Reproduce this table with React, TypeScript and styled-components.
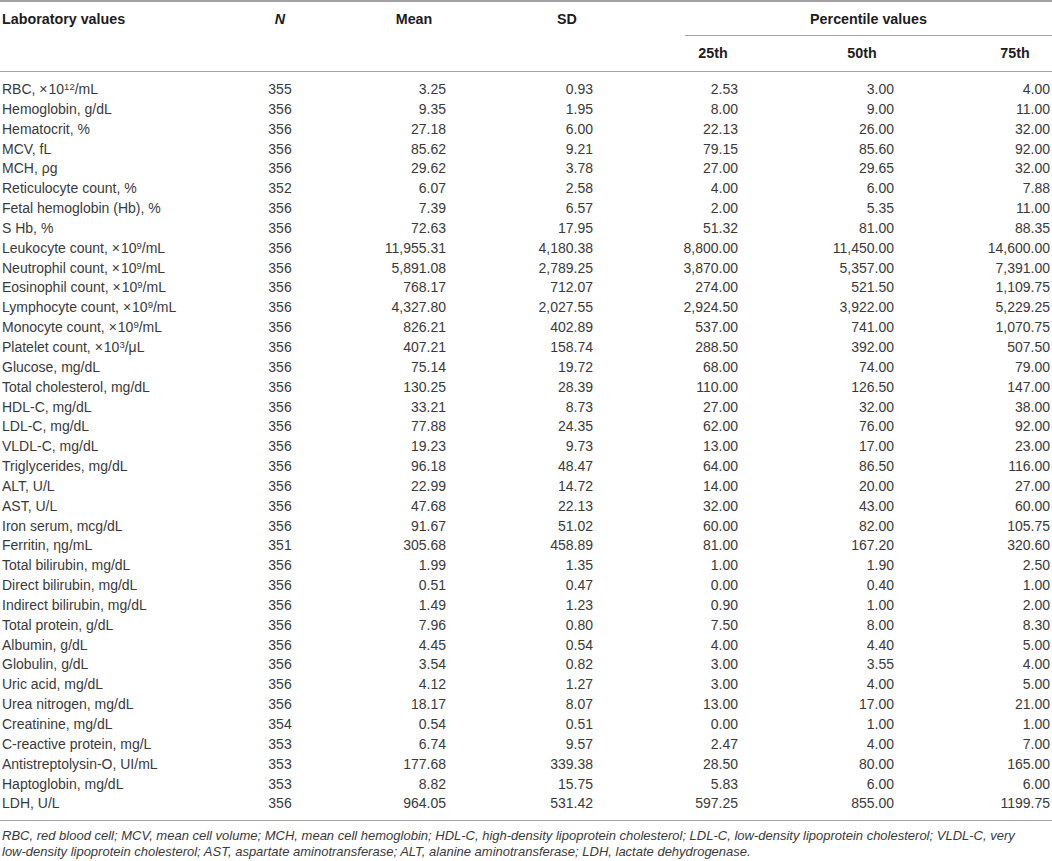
import React from "react";
import styled, { createGlobalStyle } from "styled-components";

const GlobalStyle = createGlobalStyle`
  html, body { margin: 0; padding: 0; background: #ffffff; }
  body {
    font-family: "Liberation Sans", Arial, Helvetica, sans-serif;
    color: #3a3a3a;
  }
`;

const COLS = "228px 100px 116px 147px 145px 156px 156px";

const Page = styled.div`
  width: 1052px;
`;

const Table = styled.div`
  border-top: 2px solid #a3a3a3;
  border-bottom: 1px solid #a3a3a3;
`;

const Head = styled.div`
  display: grid;
  grid-template-columns: ${COLS};
  grid-template-rows: 34px 35px;
  padding: 0 2px;
  border-bottom: 1px solid #a3a3a3;
  font-weight: bold;
  font-size: 14.3px;
  color: #1c1c1c;
`;

const HeadCell = styled.div<{ $col: string; $row: string; $align?: "start" | "center" | "end"; $italic?: boolean }>`
  grid-column: ${(p) => p.$col};
  grid-row: ${(p) => p.$row};
  display: flex;
  align-items: center;
  height: 34px;
  justify-content: ${(p) =>
    p.$align === "end" ? "flex-end" : p.$align === "center" ? "center" : "flex-start"};
  font-style: ${(p) => (p.$italic ? "italic" : "normal")};
`;

const NumHead = styled.span<{ $shift?: number }>`
  display: block;
  width: 60px;
  text-align: center;
  margin-right: ${(p) => p.$shift ?? 0}px;
`;

const SpanHead = styled.div`
  grid-column: 5 / 8;
  grid-row: 1;
  margin-left: 92px;
  margin-right: -2px;
  display: flex;
  align-items: center;
  justify-content: center;
  border-bottom: 1px solid #a3a3a3;
`;

const Body = styled.div`
  padding: 8px 2px 6px;
`;

const Row = styled.div`
  display: grid;
  grid-template-columns: ${COLS};
  height: 19.85px;
  line-height: 19.85px;
  font-size: 14px;
  white-space: nowrap;
`;

const Label = styled.div``;

const Cell = styled.div<{ $center?: boolean }>`
  text-align: ${(p) => (p.$center ? "center" : "right")};
`;

const Times = styled.span`
  margin: 0 1px 0 0;
`;

const Sup = styled.sup`
  font-size: 0.68em;
  line-height: 0;
  vertical-align: 0.45em;
`;

const Foot = styled.p`
  margin: 7px 0 0;
  padding: 0 2px;
  max-width: 1022px;
  font-style: italic;
  font-size: 13px;
  line-height: 16px;
  color: #3a3a3a;
`;

type R = [React.ReactNode, string, string, string, string, string, string];

const x10 = (e: string, unit: string) => (
  <>
    <Times>×</Times>10<Sup>{e}</Sup>/{unit}
  </>
);

const rows: R[] = [
  [<>RBC, {x10("12", "mL")}</>, "355", "3.25", "0.93", "2.53", "3.00", "4.00"],
  ["Hemoglobin, g/dL", "356", "9.35", "1.95", "8.00", "9.00", "11.00"],
  ["Hematocrit, %", "356", "27.18", "6.00", "22.13", "26.00", "32.00"],
  ["MCV, fL", "356", "85.62", "9.21", "79.15", "85.60", "92.00"],
  ["MCH, ρg", "356", "29.62", "3.78", "27.00", "29.65", "32.00"],
  ["Reticulocyte count, %", "352", "6.07", "2.58", "4.00", "6.00", "7.88"],
  ["Fetal hemoglobin (Hb), %", "356", "7.39", "6.57", "2.00", "5.35", "11.00"],
  ["S Hb, %", "356", "72.63", "17.95", "51.32", "81.00", "88.35"],
  [<>Leukocyte count, {x10("9", "mL")}</>, "356", "11,955.31", "4,180.38", "8,800.00", "11,450.00", "14,600.00"],
  [<>Neutrophil count, {x10("9", "mL")}</>, "356", "5,891.08", "2,789.25", "3,870.00", "5,357.00", "7,391.00"],
  [<>Eosinophil count, {x10("9", "mL")}</>, "356", "768.17", "712.07", "274.00", "521.50", "1,109.75"],
  [<>Lymphocyte count, {x10("9", "mL")}</>, "356", "4,327.80", "2,027.55", "2,924.50", "3,922.00", "5,229.25"],
  [<>Monocyte count, {x10("9", "mL")}</>, "356", "826.21", "402.89", "537.00", "741.00", "1,070.75"],
  [<>Platelet count, {x10("3", "μL")}</>, "356", "407.21", "158.74", "288.50", "392.00", "507.50"],
  ["Glucose, mg/dL", "356", "75.14", "19.72", "68.00", "74.00", "79.00"],
  ["Total cholesterol, mg/dL", "356", "130.25", "28.39", "110.00", "126.50", "147.00"],
  ["HDL-C, mg/dL", "356", "33.21", "8.73", "27.00", "32.00", "38.00"],
  ["LDL-C, mg/dL", "356", "77.88", "24.35", "62.00", "76.00", "92.00"],
  ["VLDL-C, mg/dL", "356", "19.23", "9.73", "13.00", "17.00", "23.00"],
  ["Triglycerides, mg/dL", "356", "96.18", "48.47", "64.00", "86.50", "116.00"],
  ["ALT, U/L", "356", "22.99", "14.72", "14.00", "20.00", "27.00"],
  ["AST, U/L", "356", "47.68", "22.13", "32.00", "43.00", "60.00"],
  ["Iron serum, mcg/dL", "356", "91.67", "51.02", "60.00", "82.00", "105.75"],
  ["Ferritin, ηg/mL", "351", "305.68", "458.89", "81.00", "167.20", "320.60"],
  ["Total bilirubin, mg/dL", "356", "1.99", "1.35", "1.00", "1.90", "2.50"],
  ["Direct bilirubin, mg/dL", "356", "0.51", "0.47", "0.00", "0.40", "1.00"],
  ["Indirect bilirubin, mg/dL", "356", "1.49", "1.23", "0.90", "1.00", "2.00"],
  ["Total protein, g/dL", "356", "7.96", "0.80", "7.50", "8.00", "8.30"],
  ["Albumin, g/dL", "356", "4.45", "0.54", "4.00", "4.40", "5.00"],
  ["Globulin, g/dL", "356", "3.54", "0.82", "3.00", "3.55", "4.00"],
  ["Uric acid, mg/dL", "356", "4.12", "1.27", "3.00", "4.00", "5.00"],
  ["Urea nitrogen, mg/dL", "356", "18.17", "8.07", "13.00", "17.00", "21.00"],
  ["Creatinine, mg/dL", "354", "0.54", "0.51", "0.00", "1.00", "1.00"],
  ["C-reactive protein, mg/L", "353", "6.74", "9.57", "2.47", "4.00", "7.00"],
  ["Antistreptolysin-O, UI/mL", "353", "177.68", "339.38", "28.50", "80.00", "165.00"],
  ["Haptoglobin, mg/dL", "353", "8.82", "15.75", "5.83", "6.00", "6.00"],
  ["LDH, U/L", "356", "964.05", "531.42", "597.25", "855.00", "1199.75"],
];

export default function App() {
  return (
    <Page>
      <GlobalStyle />
      <Table>
        <Head>
          <HeadCell $col="1" $row="1">Laboratory values</HeadCell>
          <HeadCell $col="2" $row="1" $align="center" $italic>N</HeadCell>
          <HeadCell $col="3" $row="1" $align="end">
            <NumHead $shift={2}>Mean</NumHead>
          </HeadCell>
          <HeadCell $col="4" $row="1" $align="end">
            <NumHead $shift={-4}>SD</NumHead>
          </HeadCell>
          <SpanHead>Percentile values</SpanHead>
          <HeadCell $col="5" $row="2" $align="end">
            <NumHead $shift={-5}>25th</NumHead>
          </HeadCell>
          <HeadCell $col="6" $row="2" $align="end">
            <NumHead $shift={2}>50th</NumHead>
          </HeadCell>
          <HeadCell $col="7" $row="2" $align="end">
            <NumHead $shift={5}>75th</NumHead>
          </HeadCell>
        </Head>
        <Body>
          {rows.map((r, i) => (
            <Row key={i}>
              <Label>{r[0]}</Label>
              <Cell $center>{r[1]}</Cell>
              <Cell>{r[2]}</Cell>
              <Cell>{r[3]}</Cell>
              <Cell>{r[4]}</Cell>
              <Cell>{r[5]}</Cell>
              <Cell>{r[6]}</Cell>
            </Row>
          ))}
        </Body>
      </Table>
      <Foot>
        RBC, red blood cell; MCV, mean cell volume; MCH, mean cell hemoglobin; HDL-C, high-density
        lipoprotein cholesterol; LDL-C, low-density lipoprotein cholesterol; VLDL-C, very low-density
        lipoprotein cholesterol; AST, aspartate aminotransferase; ALT, alanine aminotransferase; LDH,
        lactate dehydrogenase.
      </Foot>
    </Page>
  );
}
